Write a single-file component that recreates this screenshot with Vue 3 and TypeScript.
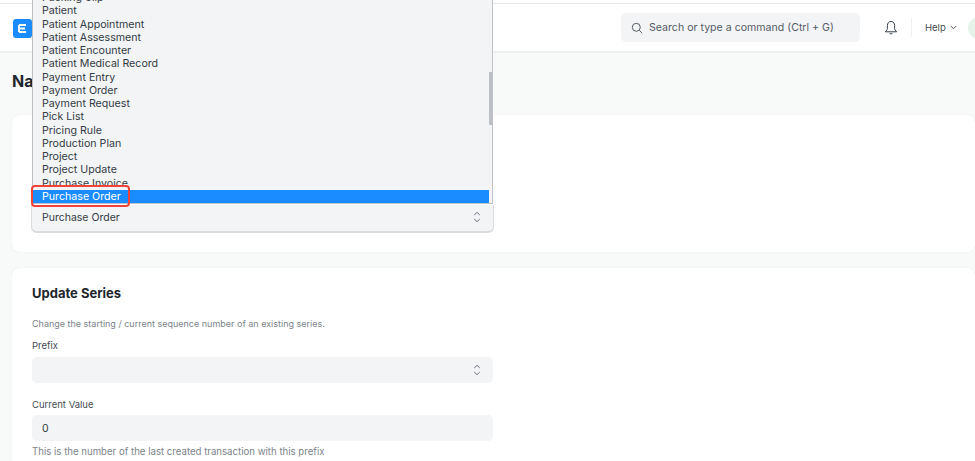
<script setup lang="ts">
const options: string[] = [
  'Packing Slip', 'Patient', 'Patient Appointment', 'Patient Assessment', 'Patient Encounter',
  'Patient Medical Record', 'Payment Entry', 'Payment Order', 'Payment Request', 'Pick List',
  'Pricing Rule', 'Production Plan', 'Project', 'Project Update', 'Purchase Invoice', 'Purchase Order',
]
</script>

<template>
  <div class="page">
    <div class="top-strip"></div>
    <header class="navbar">
      <div class="logo">
        <svg width="11" height="11" viewBox="0 0 11 11"><path d="M2 2h7M2 5.5h6M2 9h7M2 2v7" fill="none" stroke="#fff" stroke-width="1.9" /></svg>
      </div>
      <div class="search">
        <svg width="12" height="12" viewBox="0 0 12 12"><circle cx="5.3" cy="5.3" r="4" fill="none" stroke="#555c66" stroke-width="1" /><path d="M8.3 8.3l2.8 2.8" stroke="#555c66" stroke-width="1" /></svg>
        <span>Search or type a command (Ctrl + G)</span>
      </div>
      <svg class="bell" width="14" height="16" viewBox="0 0 14 16"><path d="M7 1.5c-2.4 0-3.6 1.9-3.6 4v2.8c0 1.300-1 2.300-2 3.500h11.200c-1-1.200-2-2.200-2-3.500V5.500c0-2.100-1.200-4-3.600-4zM5.500 13.200c.3 1 2.700 1 3 0" fill="none" stroke="#333c44" stroke-width="1" /></svg>
      <span class="sep"></span>
      <span class="help">Help</span>
      <svg class="chev" width="7" height="5" viewBox="0 0 7 5"><path d="M.8 1l2.700 2.700L6.200 1" fill="none" stroke="#555c66" stroke-width="1" /></svg>
      <span class="avatar"></span>
    </header>

    <main class="main">
      <h1 class="title">Naming Series</h1>
      <section class="card first">
        <div class="select chosen">
          <span>Purchase Order</span>
          <svg width="8" height="12" viewBox="0 0 8 12"><path d="M1.200 4L4 1.300 6.800 4M1.200 8L4 10.700 6.800 8" fill="none" stroke="#6b7280" stroke-width="1" /></svg>
        </div>
      </section>
      <section class="card second">
        <h2>Update Series</h2>
        <p class="desc">Change the starting / current sequence number of an existing series.</p>
        <label class="lbl">Prefix</label>
        <div class="select">
          <span></span>
          <svg width="8" height="12" viewBox="0 0 8 12"><path d="M1.200 4L4 1.300 6.800 4M1.200 8L4 10.700 6.800 8" fill="none" stroke="#6b7280" stroke-width="1" /></svg>
        </div>
        <label class="lbl second-lbl">Current Value</label>
        <div class="select value"><span>0</span></div>
        <p class="desc note">This is the number of the last created transaction with this prefix</p>
      </section>
    </main>

    <div class="dropdown">
      <ul>
        <li v-for="o in options" :key="o" :class="{ active: o === 'Purchase Order' }">{{ o }}</li>
      </ul>
      <div class="thumb"></div>
    </div>
    <div class="marker"></div>
  </div>
</template>

<style>
html, body { margin: 0; background: #fff; }
</style>

<style scoped>
.page {
  position: relative;
  width: 975px;
  height: 461px;
  overflow: hidden;
  background: #f8f9f9;
  font-family: Inter, "Liberation Sans", sans-serif;
  color: #333c44;
}
.top-strip {
  height: 3px;
  background: #fff;
  border-bottom: 1px solid #e4e6e8;
}
.navbar {
  height: 47px;
  background: #fff;
  border-bottom: 2px solid #eef0f0;
  display: flex;
  align-items: center;
  padding-left: 13px;
}
.logo {
  flex: none;
  width: 19px;
  height: 19px;
  border-radius: 3px;
  background: #1a8cff;
  display: flex;
  align-items: center;
  justify-content: center;
  margin-top: 1px;
}
.search {
  flex: none;
  margin-left: 589px;
  width: 239px;
  height: 29px;
  box-sizing: border-box;
  padding-left: 10px;
  display: flex;
  align-items: center;
  gap: 6px;
  border-radius: 5px;
  background: #f3f4f6;
  font-size: 10.600px;
  color: #555c66;
}
.bell { flex: none; margin-left: 24px; }
.sep {
  flex: none;
  width: 1px;
  height: 19px;
  background: #eef0f0;
  margin-left: 13px;
}
.help {
  flex: none;
  margin-left: 13px;
  font-size: 9.500px;
  color: #444c55;
}
.chev { flex: none; margin-left: 4px; }
.avatar {
  flex: none;
  width: 22px;
  height: 22px;
  border-radius: 50%;
  background: #e6f3ea;
  margin-left: 11px;
}
.main { padding: 0 0 0 12px; }
.title {
  margin: 0;
  height: 62px;
  box-sizing: border-box;
  padding-top: 18px;
  font-size: 16px;
  line-height: 20px;
  font-weight: 700;
  color: #1f272e;
}
.card {
  background: #fff;
  border-radius: 7px;
  box-sizing: border-box;
  box-shadow: 0 0 1px rgba(0, 0, 0, 0.14);
  padding: 0 0 0 20px;
}
.first {
  height: 137px;
  padding-top: 90px;
  margin-bottom: 16px;
}
.second { height: 260px; padding-top: 17px; }
h2 {
  margin: 0;
  font-size: 13px;
  line-height: 16px;
  font-weight: 700;
  color: #1f272e;
}
.desc {
  margin: 16.500px 0 0;
  font-size: 9px;
  line-height: 12px;
  color: #7c838b;
}
.lbl {
  display: block;
  margin-top: 10.500px;
  font-size: 9.500px;
  line-height: 12px;
  color: #444c55;
}
.second-lbl { margin-top: 16px; }
.select {
  margin-top: 5px;
  width: 461px;
  height: 26px;
  box-sizing: border-box;
  padding: 0 12px 0 10px;
  display: flex;
  align-items: center;
  justify-content: space-between;
  border-radius: 5px;
  background: #f3f4f6;
  font-size: 10.500px;
  color: #333c44;
}
.value { margin-top: 4px; }
.chosen {
  margin: 0 0 0 -1px;
  width: 463px;
  height: 28px;
  padding-bottom: 2px;
  border: 1px solid #dadcdf;
  border-top: 0;
  border-bottom-width: 2px;
  border-radius: 0 0 6px 6px;
}
.note { margin-top: 5px; font-size: 9.650px; }
.dropdown {
  position: absolute;
  left: 32px;
  top: 0;
  width: 461px;
  height: 204px;
  box-sizing: border-box;
  overflow: hidden;
  background: #f3f4f6;
  border: 1px solid #bfc1c4;
  border-top: 0;
  border-bottom: 1px solid #bfc1c4;
}
ul {
  list-style: none;
  margin: -9px 0 0;
  padding: 0;
}
li {
  height: 13.250px;
  line-height: 13.250px;
  margin-right: 3px;
  padding-left: 9px;
  font-size: 10.650px;
  color: #333c44;
  white-space: nowrap;
}
li.active {
  background: #1a8cff;
  color: #fff;
}
.thumb {
  position: absolute;
  right: 0;
  top: 72px;
  width: 3px;
  height: 53px;
  background: #bcc0c6;
}
.marker {
  position: absolute;
  left: 31px;
  top: 185px;
  width: 99px;
  height: 22px;
  box-sizing: border-box;
  border: 2.500px solid #f0443a;
  border-radius: 4px;
}
</style>
